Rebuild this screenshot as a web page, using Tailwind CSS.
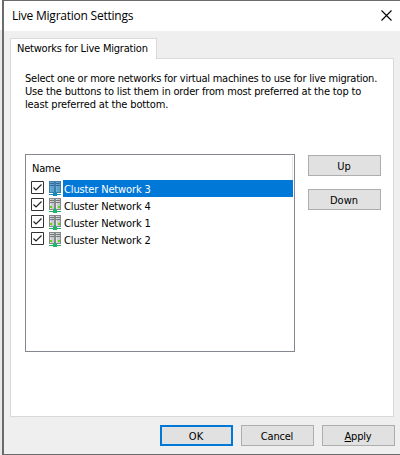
<!DOCTYPE html>
<html lang="en"><head><meta charset="utf-8"><title>Live Migration Settings</title>
<script src="https://cdn.jsdelivr.net/npm/@tailwindcss/browser@4"></script></head>
<body class="w-[400px] h-[455px] overflow-hidden bg-[#eeeeee] text-black text-[11px] leading-[13px] whitespace-nowrap font-['DejaVu_Sans_Condensed','DejaVu_Sans',sans-serif] [font-stretch:condensed]">
<svg class="hidden">
<symbol id="server" viewBox="0 0 14 16"><g shape-rendering="crispEdges"><path fill="#85898c" d="M1 1h6v12H1zM7 1h6v12H7z"/><path fill="#c9cccd" d="M2 2h4v10H2zM8 2h4v10H8z"/><path fill="#e3e5e6" d="M2 2h1v10H2zM8 2h1v10H8z"/><path fill="#777b7e" d="M2 3h4v1H2zM8 3h4v1H8zM2 5h4v1H2zM8 5h4v1H8z"/><path fill="#63d414" d="M2 9h2v2H2zM10 9h2v2h-2z"/><path fill="#20b46a" d="M6 11h2v2h1v1h4v1H9v1H5v-1H1v-1h4v-1h1z"/></g></symbol>
<symbol id="server-selected" viewBox="0 0 14 16"><g shape-rendering="crispEdges"><path fill="#3f7da8" d="M1 1h6v12H1zM7 1h6v12H7z"/><path fill="#5fa0d0" d="M2 2h4v10H2zM8 2h4v10H8z"/><path fill="#72afdc" d="M2 2h1v10H2zM8 2h1v10H8z"/><path fill="#336b98" d="M2 3h4v1H2zM8 3h4v1H8zM2 5h4v1H2zM8 5h4v1H8z"/><path fill="#37b69a" d="M3 9h1v2H3zM10 9h1v2h-1z"/><path fill="#128dba" d="M6 11h2v2h1v1h4v1H9v1H5v-1H1v-1h4v-1h1z"/></g></symbol>
<symbol id="check" viewBox="0 0 13 13"><path fill="#fff" stroke="#333" d="M.5.5h12v12H.5z"/><path fill="none" stroke="#222" stroke-width="1.2" d="M2.5 6.5 5 9l5.5-5.5"/></symbol>
</svg>
<div class="flex w-full h-full">
<div class="w-[2px] shrink-0 bg-[#e8e8e8]"><div class="h-[30px] bg-white"></div></div>
<main class="w-[398px] h-[455px] shrink-0 border-l-2 border-t border-b border-[#6b6b6b] bg-[#efefef]">
<header class="h-[30px] bg-white flex justify-between items-center pl-2 pr-[8px] text-[12px] font-['Open_Sans',sans-serif] [font-stretch:normal]"><h1 class="leading-[16px] tracking-[-0.23px]">Live Migration Settings</h1><svg class="w-[11px] h-[11px] mb-[1px]" viewBox="0 0 11 11"><path stroke="#000" stroke-width="1.1" d="M.5.5l10 10M10.5.5l-10 10"/></svg></header>
<div class="pt-[7px] pl-[6px]">
<div class="relative z-10 w-[147px] h-[21px] -mb-px bg-white border border-b-0 border-[#d9d9d9] pl-[6px] pt-[3px] tracking-[-0.21px]">Networks for Live Migration</div>
<section class="w-[384px] h-[359px] bg-white border border-[#d9d9d9] pl-[14px] pt-[13px]">
<div class="h-[82px]"><p class="tracking-[-0.24px]">Select one or more networks for virtual machines to use for live migration.</p><p class="tracking-[-0.17px]">Use the buttons to list them in order from most preferred at the top to</p><p class="tracking-[-0.14px]">least preferred at the bottom.</p></div>
<div class="flex gap-[13px]">
<div class="w-[270px] h-[198px] border border-[#828790] p-px">
<div class="h-[24px] pl-[5px] pt-[6px] border-r border-[#e5e5e5] tracking-[-0.2px]">Name</div>
<div class="h-[17px] flex items-start pl-[4px] tracking-[-0.14px]"><svg class="w-[13px] h-[13px] mt-px"><use href="#check"/></svg><svg class="w-[14px] h-[16px] ml-[4px] mr-px"><use href="#server-selected"/></svg><div class="h-[17px] grow bg-[#0078d7] text-white pl-px pt-[3px]">Cluster Network 3</div></div>
<div class="h-[17px] flex items-start pl-[4px] tracking-[-0.14px]"><svg class="w-[13px] h-[13px] mt-px"><use href="#check"/></svg><svg class="w-[14px] h-[16px] ml-[4px] mr-px"><use href="#server"/></svg><div class="pl-px pt-[3px]">Cluster Network 4</div></div>
<div class="h-[17px] flex items-start pl-[4px] tracking-[-0.14px]"><svg class="w-[13px] h-[13px] mt-px"><use href="#check"/></svg><svg class="w-[14px] h-[16px] ml-[4px] mr-px"><use href="#server"/></svg><div class="pl-px pt-[3px]">Cluster Network 1</div></div>
<div class="h-[17px] flex items-start pl-[4px] tracking-[-0.14px]"><svg class="w-[13px] h-[13px] mt-px"><use href="#check"/></svg><svg class="w-[14px] h-[16px] ml-[4px] mr-px"><use href="#server"/></svg><div class="pl-px pt-[3px]">Cluster Network 2</div></div>
</div>
<div class="flex flex-col gap-[13px] pt-px"><button class="w-[73px] h-[21px] bg-[#e1e1e1] border border-[#adadad] pt-[2px] pr-px">Up</button><button class="w-[73px] h-[21px] bg-[#e1e1e1] border border-[#adadad] pt-[2px] pr-px">Down</button></div>
</div></section></div>
<footer class="flex gap-[8px] pl-[156px] pt-[8px]"><button class="w-[73px] h-[21px] bg-[#e1e1e1] border-2 border-[#0078d7] pt-[2px] pr-px">OK</button><button class="w-[73px] h-[21px] bg-[#e1e1e1] border border-[#adadad] pt-[2px] pr-px tracking-[-0.2px]">Cancel</button><button class="w-[73px] h-[21px] bg-[#e1e1e1] border border-[#adadad] pt-[2px] pr-px tracking-[-0.2px]"><u>A</u>pply</button></footer>
</main></div></body></html>
